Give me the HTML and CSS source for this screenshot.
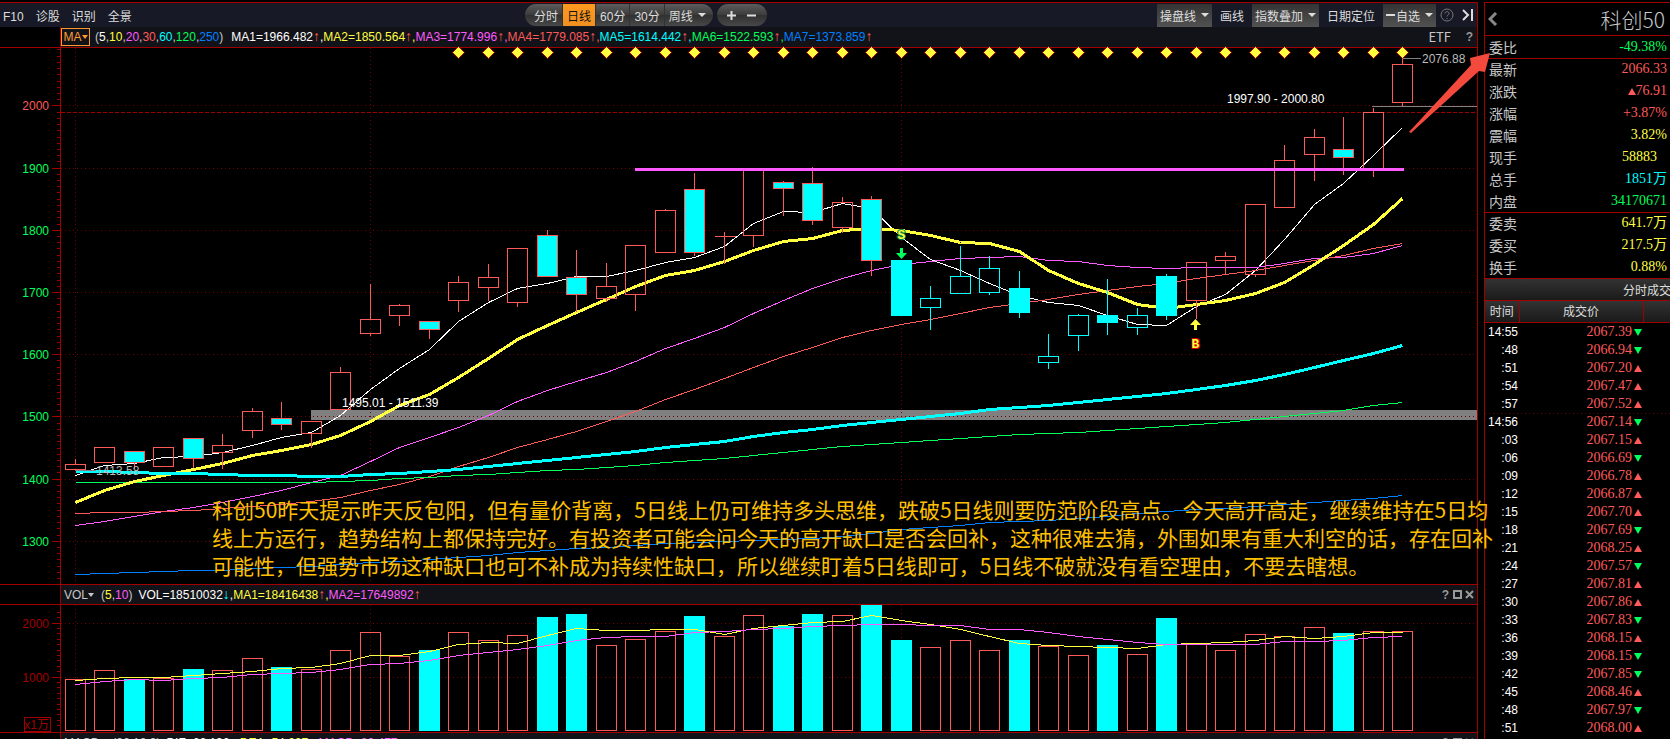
FILE: index.html
```html
<!DOCTYPE html>
<html lang="zh-CN">
<head>
    <meta charset="UTF-8">
    <meta name="viewport" content="width=device-width, initial-scale=1.0">
    <title>科创50</title>
    <link rel="stylesheet" href="styles.css">
</head>
<body>
    <main class="chart">
        <div class="toolbar">
            <nav class="links">
                <a href="#f10">F10</a>
                <a href="#diagnose">诊股</a>
                <a href="#identify">识别</a>
                <a href="#panorama">全景</a>
            </nav>
            <div class="periods">
                <div class="pill">
                    <button>分时</button>
                    <button class="active">日线</button>
                    <button>60分</button>
                    <button>30分</button>
                    <button>周线<span class="caret"></span></button>
                </div>
                <div class="pill zoom">
                    <button aria-label="放大"><svg width="9" height="9"><path d="M0 4.5H9M4.5 0V9"/></svg></button>
                    <button aria-label="缩小"><svg width="9" height="9"><path d="M0 4.5H9"/></svg></button>
                </div>
            </div>
            <div class="tools">
                <button class="raised">操盘线<span class="caret"></span></button>
                <button class="wide">画线</button>
                <button class="raised">指数叠加<span class="caret"></span></button>
                <button class="wide">日期定位</button>
                <button class="raised"><span class="minus"></span>自选<span class="caret"></span></button>
                <button class="icon" aria-label="帮助">
                    <svg width="14" height="14"><circle cx="7" cy="7" r="6"/><path d="M5 5.5C5 3 9 3 9 5.5C9 7 7 7 7 8.5M7 10V11"/></svg>
                </button>
                <button class="icon last" aria-label="收起">
                    <svg width="12" height="12"><path class="bright" d="M1 1L6 6L1 11M10 0V12"/></svg>
                </button>
            </div>
        </div>

        <div class="indicator">
            <div class="inner">
                <button class="ma">MA<span class="caret"></span></button>
                <span class="params">(<i class="c-white">5</i>,<i class="c-yellow">10</i>,<i class="c-pink">20</i>,<i class="c-red">30</i>,<i class="c-cyan">60</i>,<i class="c-green">120</i>,<i class="c-blue">250</i>)</span>
                <span class="values"><i class="c-white">MA1=1966.482<b>↑</b>,</i><i class="c-yellow">MA2=1850.564<b>↑</b>,</i><i class="c-pink">MA3=1774.996<b>↑</b>,</i><i class="c-red">MA4=1779.085<b>↑</b>,</i><i class="c-cyan">MA5=1614.442<b>↑</b>,</i><i class="c-green">MA6=1522.593<b>↑</b>,</i><i class="c-blue">MA7=1373.859<b>↑</b></i></span>
                <span class="etf">ETF</span>
                <button class="q">?</button>
            </div>
        </div>
        <svg id="price" class="plot price"></svg>

        <div class="indicator sub">
            <div class="inner">
                <button class="vol">VOL<span class="caret"></span></button>
                <span class="params">(<i class="c-yellow">5</i>,<i class="c-pink">10</i>)</span>
                <span class="values"><i class="c-white">VOL=18510032<b class="down">↓</b>,</i><i class="c-yellow">MA1=18416438<b>↑</b>,</i><i class="c-pink">MA2=17649892<b>↑</b></i></span>
                <span class="window">
                    <button class="q">?</button>
                    <button aria-label="最大化"><svg width="9" height="9"><path d="M1 1H8V8H1Z"/></svg></button>
                    <button aria-label="关闭"><svg width="9" height="9"><path d="M1 1L8 8M8 1L1 8"/></svg></button>
                </span>
            </div>
        </div>
        <svg id="volume" class="plot volume"></svg>

        <div class="indicator sub">
            <div class="inner">
                <button class="vol">MACD<span class="caret"></span></button>
                <span class="params">(26,12,9)</span>
                <span class="values"><i class="c-white">DIF=66.136<b>↑</b>,</i><i class="c-yellow">DEA=54.027<b>↑</b>,</i><i class="c-pink">MACD=20.477<b>↑</b></i></span>
                <span class="window">
                    <button class="q">?</button>
                    <button aria-label="最大化"><svg width="9" height="9"><path d="M1 1H8V8H1Z"/></svg></button>
                    <button aria-label="关闭"><svg width="9" height="9"><path d="M1 1L8 8M8 1L1 8"/></svg></button>
                </span>
            </div>
        </div>
    </main>

    <aside class="quote">
        <header>
            <button aria-label="返回"><svg width="10" height="14"><path d="M8 1L2 7L8 13"/></svg></button>
            <h1>科创50</h1>
        </header>
        <table class="stats">
            <tr class="line"><th>委比</th><td class="c-green">-49.38%</td></tr>
            <tr><th>最新</th><td class="c-red">2066.33</td></tr>
            <tr><th>涨跌</th><td class="c-red"><span class="tri up"></span>76.91</td></tr>
            <tr><th>涨幅</th><td class="c-red">+3.87%</td></tr>
            <tr><th>震幅</th><td class="c-yellow">3.82%</td></tr>
            <tr><th>现手</th><td class="c-yellow inset">58883</td></tr>
            <tr><th>总手</th><td class="c-cyan">1851万</td></tr>
            <tr class="line"><th>内盘</th><td class="c-green">34170671</td></tr>
            <tr><th>委卖</th><td class="c-yellow">641.7万</td></tr>
            <tr><th>委买</th><td class="c-yellow">217.5万</td></tr>
            <tr><th>换手</th><td class="c-yellow">0.88%</td></tr>
        </table>
        <h2>分时成交</h2>
        <table class="ticks">
            <thead><tr><th>时间</th><th>成交价</th><th></th></tr></thead>
            <tbody id="ticks"></tbody>
        </table>
    </aside>

    <p class="note">科创50昨天提示昨天反包阳，但有量价背离，5日线上仍可维持多头思维，跌破5日线则要防范阶段高点。今天高开高走，继续维持在5日均<br>线上方运行，趋势结构上都保持完好。有投资者可能会问今天的高开缺口是否会回补，这种很难去猜，外围如果有重大利空的话，存在回补<br>可能性，但强势市场这种缺口也可不补成为持续性缺口，所以继续盯着5日线即可，5日线不破就没有看空理由，不要去瞎想。</p>
    <svg class="pointer" width="84" height="84"><path d="M0 79L62 12L61 5L81 0L76 19L70 18L2 80Z"/></svg>

    <script src="chart.js"></script>
</body>
</html>
```
FILE: styles.css
```css
* {
    box-sizing: border-box;
}
body {
    margin: 0;
    height: 100vh;
    padding-top: 2px;
    display: flex;
    gap: 6px;
    position: relative;
    overflow: hidden;
    background: #000;
    color: #c8c8c8;
    font-family: "Liberation Sans", "Noto Sans CJK SC", sans-serif;
    font-size: 12px;
}
button {
    display: inline-flex;
    align-items: center;
    justify-content: center;
    margin: 0;
    padding: 0;
    border: none;
    background: none;
    color: inherit;
    font: inherit;
    white-space: nowrap;
    cursor: pointer;
}
a {
    color: inherit;
    text-decoration: none;
}
i {
    font-style: normal;
}
svg path,
svg circle {
    fill: none;
}

.c-white { color: #fff; }
.c-yellow { color: #ffff40; }
.c-pink { color: #ff5aff; }
.c-red { color: #ff5a5a; }
.c-cyan { color: #00ffff; }
.c-green { color: #00ff5a; }
.c-blue { color: #0080ff; }

.caret {
    margin-left: 5px;
    border: 4px solid transparent;
    border-top-color: currentColor;
    border-bottom: none;
}

/* chart column */
.chart {
    flex: 1;
    min-width: 0;
    border-top: 1px solid #a00000;
    border-right: 1px solid #a00000;
}
.toolbar {
    display: flex;
    align-items: center;
    height: 24px;
    background: #171a26;
    color: #ddd;
}
.links {
    display: flex;
    align-items: baseline;
    gap: 12px;
    padding-left: 3px;
    width: 525px;
}
.periods {
    display: flex;
    gap: 4px;
}
.pill {
    display: flex;
    height: 22px;
    padding: 0 3px 0 5px;
    border-radius: 11px;
    overflow: hidden;
    background: linear-gradient(#5c5c5c, #3c3c3c 50%, #303030 50%, #484848);
}
.pill button {
    padding: 0 4px;
    border-right: 1px solid #333;
}
.pill button:last-child {
    border-right: none;
}
.pill .active {
    background: linear-gradient(#ff9a20, #f09020);
    color: #111;
}
.zoom {
    padding: 0 5px;
}
.zoom button {
    width: 20px;
    border: none;
}
.zoom path {
    stroke: #ddd;
    stroke-width: 2;
}
.tools {
    display: flex;
    align-items: center;
    margin-left: auto;
}
.raised {
    height: 23px;
    padding: 0 3px;
    background: linear-gradient(#343434, #525252);
}
.wide {
    padding: 0 8px;
}
.minus {
    width: 9px;
    height: 2px;
    margin-right: 1px;
    background: #ddd;
}
.icon {
    width: 22px;
}
.icon.last {
    width: 19px;
    padding: 0;
}
.icon path,
.icon circle {
    stroke: #777;
}
.icon .bright {
    stroke: #ddd;
    stroke-width: 2;
}

/* indicator strips */
.indicator {
    height: 21px;
    padding-left: 60px;
    border-bottom: 1px solid #a00000;
    white-space: nowrap;
}
.indicator.sub {
    border-top: 1px solid #a00000;
}
.inner {
    display: flex;
    align-items: center;
    height: 100%;
    border-left: 1px solid #a00000;
    background: #121318;
    line-height: 18px;
}
.ma {
    width: 29px;
    height: 18px;
    border: 1px solid #ff9a30;
    color: #ff9a30;
}
.ma .caret,
.vol .caret {
    margin-left: 0;
    border-width: 3px;
    border-top-width: 4px;
    border-bottom: none;
}
.vol {
    padding-left: 3px;
}
.params {
    margin: 0 8px 0 5px;
}
.vol + .params {
    margin: 0 6px 0 7px;
}
.values b {
    color: #ff5a5a;
    font-weight: normal;
    font-size: 14px;
    line-height: 12px;
}
.values .down {
    color: #00ffff;
}
.etf {
    margin-left: auto;
    margin-right: 14px;
    font-family: "Noto Sans CJK SC", sans-serif;
    font-size: 13px;
}
.q {
    width: 9px;
    margin-right: 3px;
    color: #999;
    font-weight: bold;
}
.window {
    display: flex;
    gap: 3px;
    margin-left: auto;
    margin-right: 3px;
}
.window .q {
    margin: 0;
}
.window path {
    stroke: #999;
    stroke-width: 2;
}

/* plots */
.plot {
    display: block;
    width: 100%;
}
.price {
    height: 536px;
    overflow: visible;
}
.volume {
    height: 127px;
}
.plot text {
    font-size: 12px;
    fill: #fff;
}
.plot rect,
.plot line,
.plot polyline {
    shape-rendering: crispEdges;
    fill: none;
}
.plot .axis { stroke: #a00000; }
.plot .grid { stroke: #6c0000; stroke-dasharray: 1 3; }
.plot .last { stroke: #a00000; stroke-dasharray: 4 2; }
.plot .band { fill: #808080; }
.plot .gap { stroke: #808080; }
.plot .resist { stroke: #ff5aff; stroke-width: 3; }
.plot .u { stroke: #ff5a5a; }
.plot .d { stroke: #ff5a5a; fill: #00ffff; }
.plot .D { stroke: #00ffff; fill: #00ffff; }
.plot .h { stroke: #00ffff; }
.plot .bold { stroke-width: 3; }
.plot .diamond { fill: #ffff40; stroke: #b00000; }
.plot .sell { fill: #00ff5a; }
.plot .buy { fill: #ffff40; }
.plot text.green { fill: #00ff5a; }
.plot text.red { fill: #ff5a5a; }
.plot text.dark { fill: #a00000; }
.plot text.muted { fill: #bbb; }
.plot text.end { text-anchor: end; }
.plot text.mark {
    font-family: "Liberation Mono", monospace;
    font-size: 13px;
    font-weight: bold;
    text-anchor: middle;
    fill: #ffff40;
    stroke: #d00000;
    stroke-width: 2;
    paint-order: stroke;
}
.plot text.mark.s {
    stroke: #008040;
}

/* quote column */
.quote {
    width: 186px;
    border-top: 1px solid #a00000;
    border-left: 1px solid #a00000;
    overflow: hidden;
    font-family: "Noto Sans CJK SC", sans-serif;
}
.quote header {
    display: flex;
    align-items: center;
    justify-content: space-between;
    height: 33px;
    padding: 0 5px 0 3px;
    border-bottom: 1px solid #a00000;
}
.quote h1 {
    margin: 0;
    font-size: 21px;
    line-height: 30px;
    font-weight: 300;
}
.quote header path {
    stroke: #888;
    stroke-width: 3;
}
.quote table {
    width: 100%;
    border-collapse: collapse;
}
.quote th,
.quote td {
    padding: 0;
    font-weight: normal;
}
.stats tr {
    height: 22px;
}
.stats .line {
    border-bottom: 1px solid #a00000;
}
.stats th {
    padding-left: 4px;
    text-align: left;
    font-size: 14px;
    line-height: 20px;
}
.stats td {
    padding-right: 3px;
    text-align: right;
    font: 14px/20px "Liberation Serif", "Noto Sans CJK SC", serif;
}
.stats .inset {
    padding-right: 13px;
}
.tri {
    display: inline-block;
    margin-left: 2px;
    border: 4px solid transparent;
}
.tri.up {
    border-top: none;
    border-bottom: 7px solid #ff5a5a;
}
.tri.dn {
    border-bottom: none;
    border-top: 7px solid #00ff5a;
}
.quote h2 {
    margin: 0;
    height: 23px;
    padding-left: 138px;
    border: solid #a00000;
    border-width: 1px 0;
    background: linear-gradient(#333, #1a1a1a);
    color: #ddd;
    font-size: 12px;
    line-height: 21px;
    font-weight: normal;
    white-space: nowrap;
}
.ticks {
    table-layout: fixed;
}
.ticks th {
    height: 21px;
    border: solid #a00000;
    border-width: 0 1px 1px 0;
    background: linear-gradient(#333, #1a1a1a);
    color: #ddd;
    line-height: 20px;
}
.ticks th:first-child {
    width: 34px;
}
.ticks th:nth-child(2) {
    width: 124px;
}
.ticks th:last-child {
    border-right: none;
}
.ticks td {
    height: 18px;
    text-align: right;
    color: #ff5a5a;
    font: 14px/18px "Liberation Serif", serif;
}
.ticks td:first-child {
    color: #fff;
    padding-right: 1px;
    font: 12px/18px "Liberation Sans", sans-serif;
}
.ticks td:nth-child(2) {
    padding-right: 1px;
}
.ticks .minute {
    background: repeating-linear-gradient(90deg, #6c0000 0 1px, transparent 1px 4px) top / 100% 1px no-repeat;
}

/* drawn over the charts */
.note {
    position: absolute;
    left: 212px;
    top: 495px;
    margin: 0;
    color: #ffc000;
    font: 21px/28px "Noto Sans CJK SC", sans-serif;
    white-space: nowrap;
}
.pointer {
    position: absolute;
    right: 177px;
    top: 53px;
}
.pointer path {
    fill: #f44a3e;
}
```
FILE: chart.js
```js
const NS = 'http://www.w3.org/2000/svg';
const STEP = 29.5;
const LEFT = 75;

// x of the n-th day
const dayX = n => Math.floor(LEFT + n * STEP) + 0.5;

function add(parent, tag, attrs, text) {
    const el = document.createElementNS(NS, tag);
    for (const key in attrs) el.setAttribute(key, attrs[key]);
    if (text !== undefined) el.textContent = text;
    parent.appendChild(el);
    return el;
}

function line(parent, cls, x1, y1, x2, y2) {
    return add(parent, 'line', { class: cls, x1, y1, x2, y2 });
}

function curve(parent, color, ys, bold) {
    const points = ys.map((y, n) => dayX(n) + ',' + y).join(' ');
    return add(parent, 'polyline', { points, stroke: color, class: bold ? 'bold' : '' });
}

// kind, high, body top, body bottom, low
// u = hollow red, d = filled with red edge, D = filled, h = hollow cyan
const candles = [
    ['u', 459, 464, 469, 469], ['u', 447, 447, 462, 462], ['d', 451, 451, 462, 468], ['u', 447, 447, 466, 466],
    ['d', 438, 438, 458, 467], ['u', 434, 445, 452, 468], ['u', 408, 411, 430, 437], ['d', 402, 418, 424, 429],
    ['u', 421, 421, 433, 447], ['u', 367, 372, 409, 409], ['u', 284, 319, 333, 335], ['u', 304, 305, 315, 325],
    ['d', 321, 321, 329, 338], ['u', 276, 282, 300, 311], ['u', 264, 277, 287, 300], ['u', 248, 248, 302, 306],
    ['d', 230, 235, 276, 276], ['d', 250, 277, 294, 311], ['u', 263, 286, 298, 301], ['u', 245, 245, 294, 310],
    ['u', 209, 210, 252, 252], ['d', 173, 189, 252, 255], ['u', 232, 236, 236, 263], ['u', 169, 169, 235, 246],
    ['d', 181, 182, 188, 215], ['d', 167, 183, 220, 224], ['u', 197, 202, 227, 232], ['d', 196, 199, 260, 275],
    ['D', 260, 260, 315, 315], ['h', 286, 298, 307, 329], ['h', 246, 276, 293, 293], ['h', 256, 268, 292, 294],
    ['D', 271, 288, 312, 317], ['h', 334, 356, 362, 368], ['h', 314, 315, 335, 350], ['D', 279, 315, 322, 334],
    ['h', 308, 315, 327, 334], ['D', 274, 276, 315, 319], ['u', 262, 262, 300, 318], ['u', 252, 256, 260, 274],
    ['u', 204, 204, 274, 276], ['u', 145, 160, 207, 207], ['u', 129, 137, 154, 180], ['d', 117, 149, 157, 174],
    ['u', 108, 112, 168, 176], ['u', 58, 64, 102, 105]
];

const averages = [
    { color: '#ffffff', y: [475, 465, 463, 457, 456, 452, 445, 437, 432, 415, 389, 368, 349, 321, 302, 288, 283, 276, 276, 270, 262, 257, 246, 223, 211, 212, 203, 208, 237, 259, 270, 283, 295, 302, 305, 315, 324, 325, 306, 294, 270, 239, 204, 183, 155, 127] },
    { color: '#ff5aff', y: [525, 521, 516, 511, 507, 502, 496, 490, 482, 475, 461, 447, 437, 427, 415, 401, 390, 381, 372, 361, 348, 338, 327, 313, 300, 288, 278, 270, 264, 261, 258, 257, 256, 260, 261, 265, 267, 268, 267, 267, 267, 263, 258, 257, 253, 245] },
    { color: '#ff5a5a', y: [513, 512, 512, 511, 510, 508, 506, 504, 501, 497, 490, 484, 476, 466, 457, 447, 439, 431, 421, 411, 399, 389, 378, 367, 356, 347, 337, 330, 324, 319, 313, 307, 303, 299, 294, 290, 286, 283, 278, 274, 270, 265, 260, 255, 248, 243] },
    { color: '#00ff5a', y: [482, 482, 482, 482, 482, 482, 482, 482, 482, 481, 480, 478, 477, 475, 474, 472, 470, 469, 467, 465, 462, 460, 458, 455, 452, 449, 446, 444, 442, 440, 438, 436, 434, 433, 432, 430, 428, 426, 424, 422, 419, 416, 413, 410, 405, 402] },
    { color: '#0080ff', y: [574, 573, 572, 571, 570, 570, 568, 567, 566, 564, 562, 561, 559, 557, 555, 552, 550, 548, 547, 545, 543, 542, 541, 540, 539, 538, 536, 533, 529, 527, 525, 522, 521, 520, 518, 516, 513, 511, 509, 508, 506, 504, 502, 500, 498, 495] },
    { color: '#ffff40', bold: true, y: [502, 490, 481, 475, 469, 463, 455, 450, 444, 435, 421, 405, 394, 377, 358, 339, 325, 312, 299, 286, 275, 270, 261, 250, 241, 238, 230, 228, 230, 235, 242, 243, 251, 270, 283, 292, 304, 308, 304, 300, 293, 282, 264, 245, 224, 198] },
    { color: '#00ffff', bold: true, y: [471, 471, 472, 473, 473, 474, 475, 475, 476, 476, 474, 473, 471, 469, 466, 463, 460, 457, 454, 451, 447, 444, 441, 436, 432, 429, 425, 422, 419, 416, 413, 409, 407, 405, 402, 399, 396, 393, 389, 385, 380, 374, 367, 360, 353, 345] }
];

const volumes = [679, 670, 679, 678, 669, 670, 658, 667, 669, 650, 632, 656, 650, 632, 640, 635, 617, 614, 645, 639, 631, 616, 636, 615, 626, 614, 615, 605, 640, 647, 640, 650, 640, 646, 655, 645, 654, 618, 644, 650, 634, 636, 627, 633, 631, 631];
const volumeAverages = [
    { color: '#ffff40', y: [680, 678, 677, 677, 675, 673, 671, 668, 667, 663, 655, 655, 651, 644, 642, 643, 635, 628, 630, 630, 629, 629, 634, 628, 625, 622, 621, 615, 620, 624, 629, 636, 643, 645, 646, 647, 648, 644, 643, 642, 640, 636, 638, 636, 632, 632] },
    { color: '#ff5aff', y: [684, 681, 679, 680, 678, 677, 674, 673, 672, 669, 664, 663, 660, 655, 652, 649, 645, 640, 637, 636, 636, 632, 631, 629, 628, 626, 625, 624, 624, 625, 625, 629, 629, 632, 636, 639, 642, 644, 644, 644, 644, 641, 641, 640, 637, 636] }
];

function verticals(g, top, bottom) {
    [0, 10, 28].forEach(n => line(g, 'grid', dayX(n), top, dayX(n), bottom));
}

function drawPrice() {
    const g = add(document.getElementById('price'), 'g', { transform: 'translate(0 -48)' });

    add(g, 'rect', { class: 'band', x: 311, y: 410, width: '100%', height: 10, 'clip-path': 'url(#inside)' });
    const clip = add(g, 'clipPath', { id: 'inside' });
    add(clip, 'rect', { x: 0, y: 0, width: '100%', height: 600 });

    // price scale: 100 points are 62.2px, ten marks each
    line(g, 'axis', 60.5, 48, 60.5, 584);
    for (let k = -9; k < 77; k++) {
        const y = Math.floor(105.9 + k * 6.22) + 0.5;
        line(g, 'axis', k % 10 === 0 ? 52 : 57, y, 60, y);
    }
    for (let n = 0; n < 8; n++) {
        const y = Math.floor(105.9 + n * 62.2) + 0.5;
        line(g, 'grid', 61, y, '100%', y);
        add(g, 'text', { class: 'end ' + (n ? 'green' : 'red'), x: 49, y: y + 4.5 }, 2000 - n * 100);
    }
    verticals(g, 48, 584);
    line(g, 'last', 61, 112.5, '100%', 112.5);

    averages.forEach(a => curve(g, a.color, a.y.map(y => y + 0.5), a.bold));

    candles.forEach(([kind, high, top, bottom, low], n) => {
        const x = dayX(n);
        const wick = kind === 'd' ? 'u' : kind;
        if (high < top) line(g, wick, x, high, x, top);
        if (low > bottom) line(g, wick, x, bottom, x, low + 1);
        if (top === bottom) line(g, kind, x - 10, top + 0.5, x + 11, top + 0.5);
        else add(g, 'rect', { class: kind, x: x - 10, y: top + 0.5, width: 20, height: bottom - top });
    });

    line(g, 'resist', 635, 169.5, 1404, 169.5);
    line(g, 'gap', 1372, 106.5, '100%', 106.5);
    line(g, 'gap', 1403, 58.5, 1421, 58.5);
    line(g, 'gap', 75, 470.5, 96, 470.5);
    add(g, 'text', { class: 'muted', x: 1422, y: 63 }, '2076.88');
    add(g, 'text', { x: 1227, y: 103 }, '1997.90 - 2000.80');
    add(g, 'text', { x: 342, y: 407 }, '1495.01 - 1511.39');
    add(g, 'text', { class: 'muted', x: 96, y: 475 }, '1413.58');

    for (let n = 13; n < candles.length; n++) {
        const x = dayX(n);
        add(g, 'polygon', { class: 'diamond', points: `${x - 6},52.5 ${x},46.5 ${x + 6},52.5 ${x},58.5` });
    }

    add(g, 'polygon', { class: 'sell', points: '900,248 903,248 903,253 907,253 901.5,259 896,253 900,253' });
    add(g, 'polygon', { class: 'buy', points: '1194,330 1197,330 1197,325 1201,325 1195.5,319 1190,325 1194,325' });
    add(g, 'text', { class: 'mark s', x: 901.5, y: 239 }, 'S');
    add(g, 'text', { class: 'mark', x: 1195.5, y: 348 }, 'B');
}

function drawVolume() {
    const g = add(document.getElementById('volume'), 'g', { transform: 'translate(0 -605)' });

    line(g, 'axis', 60.5, 605, 60.5, 732);
    for (let k = -2; k < 20; k++) {
        const y = Math.floor(623 + k * 5.4) + 0.5;
        line(g, 'axis', k % 10 === 0 ? 52 : 57, y, 60, y);
    }
    line(g, 'grid', 61, 623.5, '100%', 623.5);
    line(g, 'grid', 61, 677.5, '100%', 677.5);
    verticals(g, 605, 732);
    add(g, 'text', { class: 'dark end', x: 49, y: 628 }, '2000');
    add(g, 'text', { class: 'dark end', x: 49, y: 682 }, '1000');
    add(g, 'rect', { class: 'axis', x: 24.5, y: 717.5, width: 26, height: 14 });
    add(g, 'text', { class: 'dark end', x: 49, y: 729 }, 'x1万');

    // bars are filled on falling days
    volumes.forEach((top, n) => {
        const falling = 'dD'.includes(candles[n][0]);
        add(g, 'rect', { class: falling ? 'D' : 'u', x: dayX(n) - 10, y: top + 0.5, width: 20, height: 730 - top });
    });
    volumeAverages.forEach(a => curve(g, a.color, a.y.map(y => y + 0.5)));
}

const trades = [
    ['14:55', '2067.39', 'dn'], [':48', '2066.94', 'dn'], [':51', '2067.20', 'up'], [':54', '2067.47', 'up'],
    [':57', '2067.52', 'up'], ['14:56', '2067.14', 'dn'], [':03', '2067.15', 'up'], [':06', '2066.69', 'dn'],
    [':09', '2066.78', 'up'], [':12', '2066.87', 'up'], [':15', '2067.70', 'up'], [':18', '2067.69', 'dn'],
    [':21', '2068.25', 'up'], [':24', '2067.57', 'dn'], [':27', '2067.81', 'up'], [':30', '2067.86', 'up'],
    [':33', '2067.83', 'dn'], [':36', '2068.15', 'up'], [':39', '2068.15', 'dn'], [':42', '2067.85', 'dn'],
    [':45', '2068.46', 'up'], [':48', '2067.97', 'dn'], [':51', '2068.00', 'up']
];

function fillTrades() {
    document.getElementById('ticks').innerHTML = trades.map(([time, price, dir], n) =>
        `<tr${n && time.length > 3 ? ' class="minute"' : ''}><td>${time}</td><td>${price}<span class="tri ${dir}"></span></td><td></td></tr>`
    ).join('');
}

drawPrice();
drawVolume();
fillTrades();
```
